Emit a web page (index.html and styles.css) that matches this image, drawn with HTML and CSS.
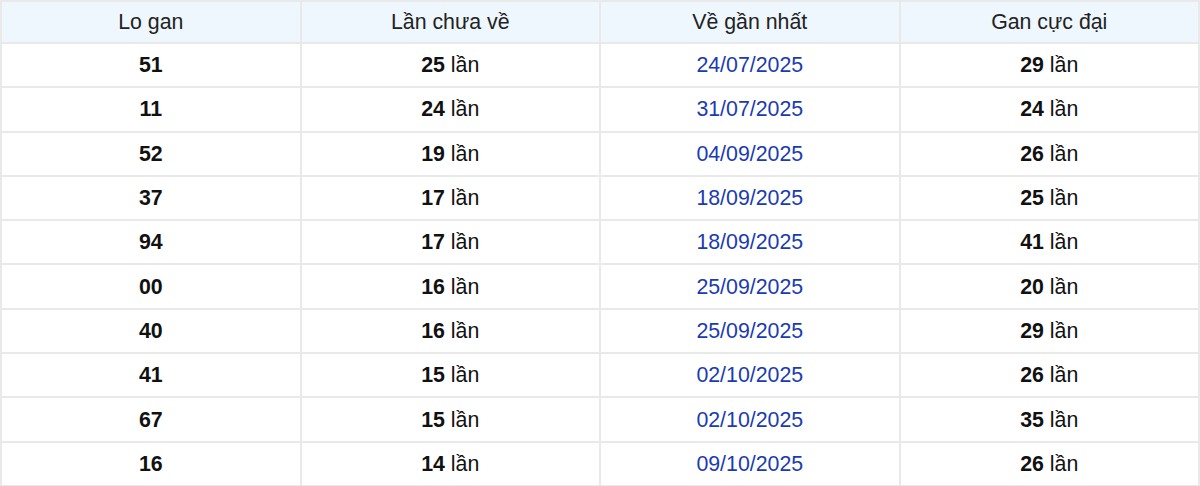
FILE: index.html
```html
<!DOCTYPE html>
<html lang="vi">
<head>
<meta charset="utf-8">
<title>Lo gan</title>
<link rel="stylesheet" href="styles.css">
</head>
<body>
<table class="gan-table">
  <thead>
    <tr><th>Lo gan</th><th>Lần chưa về</th><th>Về gần nhất</th><th>Gan cực đại</th></tr>
  </thead>
  <tbody>
    <tr><td><b>51</b></td><td><b>25</b> lần</td><td class="date">24/07/2025</td><td><b>29</b> lần</td></tr>
    <tr><td><b>11</b></td><td><b>24</b> lần</td><td class="date">31/07/2025</td><td><b>24</b> lần</td></tr>
    <tr><td><b>52</b></td><td><b>19</b> lần</td><td class="date">04/09/2025</td><td><b>26</b> lần</td></tr>
    <tr><td><b>37</b></td><td><b>17</b> lần</td><td class="date">18/09/2025</td><td><b>25</b> lần</td></tr>
    <tr><td><b>94</b></td><td><b>17</b> lần</td><td class="date">18/09/2025</td><td><b>41</b> lần</td></tr>
    <tr><td><b>00</b></td><td><b>16</b> lần</td><td class="date">25/09/2025</td><td><b>20</b> lần</td></tr>
    <tr><td><b>40</b></td><td><b>16</b> lần</td><td class="date">25/09/2025</td><td><b>29</b> lần</td></tr>
    <tr><td><b>41</b></td><td><b>15</b> lần</td><td class="date">02/10/2025</td><td><b>26</b> lần</td></tr>
    <tr><td><b>67</b></td><td><b>15</b> lần</td><td class="date">02/10/2025</td><td><b>35</b> lần</td></tr>
    <tr><td><b>16</b></td><td><b>14</b> lần</td><td class="date">09/10/2025</td><td><b>26</b> lần</td></tr>
  </tbody>
</table>
</body>
</html>
```
FILE: styles.css
```css
html, body {
  margin: 0;
  padding: 0;
  background: #fff;
}
body {
  font-family: "Liberation Sans", Arial, sans-serif;
  font-size: 21.33px;
  color: #111;
}
.gan-table {
  width: 1200px;
  border-collapse: collapse;
  table-layout: fixed;
}
.gan-table th,
.gan-table td {
  border: 2px solid #e9e9e9;
  text-align: center;
  vertical-align: middle;
  padding: 1px 0 0;
  width: 25%;
}
.gan-table th {
  background: #eef6fe;
  font-weight: normal;
  color: #222;
  height: 39px;
}
.gan-table td {
  height: 41.3px;
}
.gan-table b {
  font-weight: bold;
  color: #111;
}
.gan-table .date {
  color: #1a3bb3;
}
```
